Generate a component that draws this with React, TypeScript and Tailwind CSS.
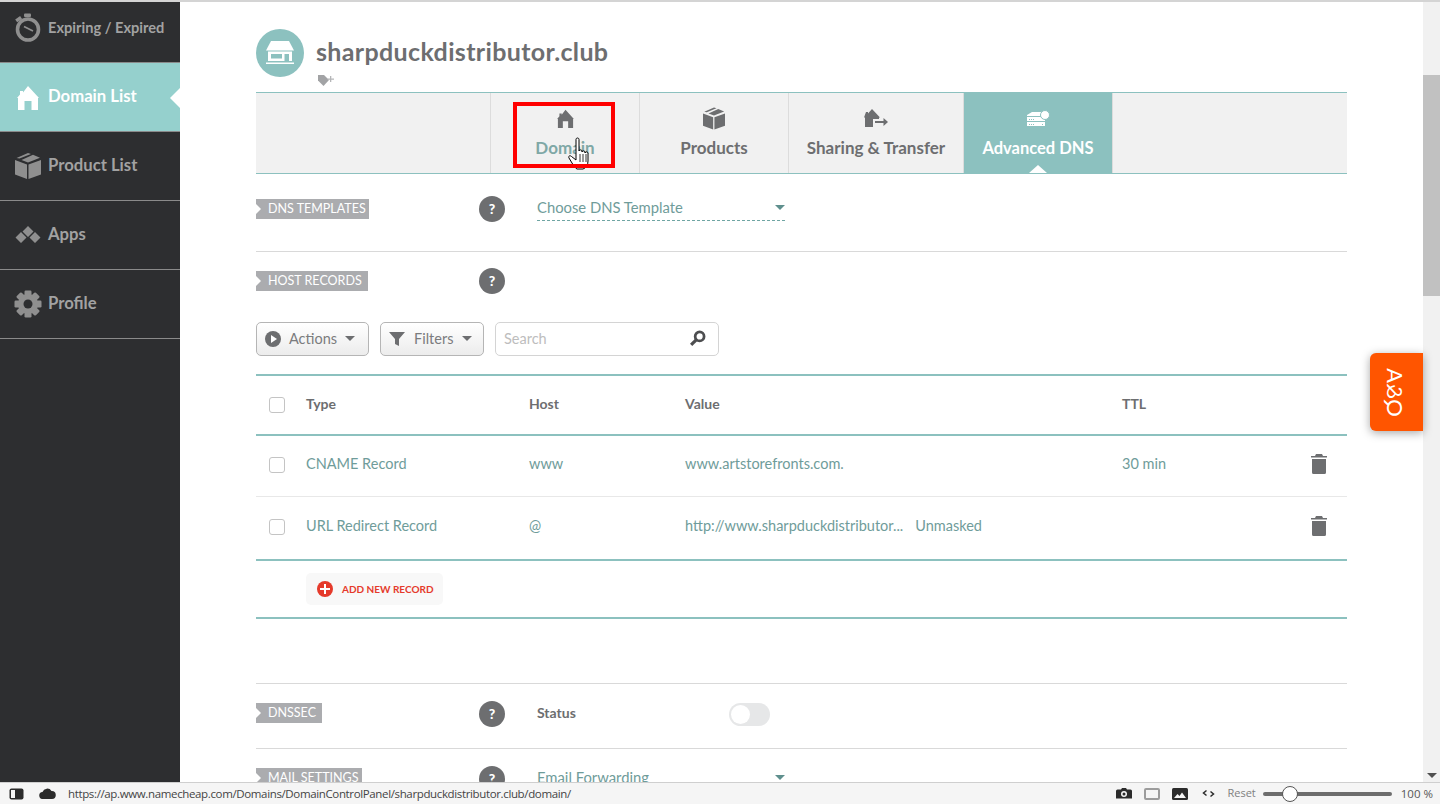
import React from "react";

function IconClock({ c = "#8f8f8f" }: { c?: string }) {
  return (
    <svg width="28" height="30" viewBox="0 0 28 30">
      <circle cx="14" cy="16.500" r="10.500" fill="none" stroke={c} strokeWidth="3.600" />
      <rect x="10" y="0.500" width="7" height="3.500" rx="1" fill={c} />
      <rect x="1.500" y="4.500" width="6" height="3.500" transform="rotate(-35 4.500 6)" fill={c} />
      <path d="M10 13.500l9 4.500" stroke={c} strokeWidth="1.800" fill="none" />
    </svg>
  );
}
function IconHouse({ c, w = 22, h = 25 }: { c: string; w?: number; h?: number }) {
  return (
    <svg width={w} height={h} viewBox="0 0 22 25">
      <path fill={c} d="M3 6h3v1.500L11 1l11 12h-1v12h-6.500v-9h-7v9H1V13H0l3-3.500z" />
    </svg>
  );
}
function IconBox({ c, w = 26, h = 26 }: { c: string; w?: number; h?: number }) {
  return (
    <svg width={w} height={h} viewBox="0 0 26 26">
      <path fill={c} d="M0 7l12 4.500V26L0 21.500zM26 7v14.500L13.500 26V11.500zM13 0l3 1-11.500 4.500L1.500 5zM18 1.800l7 3L13 9.500 6.500 7z" />
    </svg>
  );
}
function IconApps({ c }: { c: string }) {
  return (
    <svg width="26" height="18" viewBox="0 0 26 18">
      <path fill={c} d="M13 0l5.500 5.500L13 11 7.500 5.500zM6 6l5.500 5.500L6 17 .5 11.500zM20 6l5.500 5.500L20 17l-5.500-5.500z" />
    </svg>
  );
}
function IconGear({ c }: { c: string }) {
  return (
    <svg width="28" height="28" viewBox="0 0 28 28">
      <g fill={c}>
        <circle cx="14" cy="14" r="10" />
        {[0, 45, 90, 135, 180, 225, 270, 315].map((a) => (
          <rect key={a} x="10.500" y="0.500" width="7" height="6" rx="1.200" transform={`rotate(${a} 14 14)`} />
        ))}
      </g>
      <circle cx="14" cy="14" r="4.500" fill="#2d2e30" />
    </svg>
  );
}
function Store() {
  return (
    <svg width="28" height="24" viewBox="0 0 28 24">
      <path fill="#fff" d="M5 0h18l5 9.500H0z" />
      <path fill="#fff" d="M2 10.500h24V20H2zM0 21.500h28V23H0z" />
      <path fill="#8cc1bf" d="M5 13h11v4.500H5zM18.500 13h4.500v7h-4.500z" />
    </svg>
  );
}
function Help() {
  return (
    <div className="w-[26px] h-[26px] rounded-full bg-[#6d6e70] flex items-center justify-center text-white text-[14px] font-black leading-none">?</div>
  );
}
function Tag({ children, w }: { children: string; w: string }) {
  return (
    <div className={`relative h-[20px] ${w} bg-[#abacaf] text-white text-[12.5px] leading-[20px] pl-[12px] whitespace-nowrap overflow-hidden`}>
      <span className="absolute left-0 top-[5px] w-0 h-0 border-y-[5px] border-y-transparent border-l-[5px] border-l-white" />
      {children}
    </div>
  );
}
function Trash() {
  return (
    <svg width="16" height="20" viewBox="0 0 16 20">
      <path fill="#6d6e70" d="M5 0h6l1 2h4v1.500H0V2h4zM1 5h14v13.500a1.500 1.500 0 0 1-1.500 1.500h-11A1.500 1.500 0 0 1 1 18.500z" />
    </svg>
  );
}
function Check() {
  return <div className="w-[16px] h-[16px] rounded-[3px] border border-[#c4c4c4] bg-white" />;
}
function Caret({ c = "#6d6e70" }: { c?: string }) {
  return <span className="inline-block w-0 h-0 border-x-[5px] border-x-transparent border-t-[5px]" style={{ borderTopColor: c }} />;
}
function SideItem({ icon, label, active, small, h = "h-[69px]", pad = "" }: { icon: React.ReactNode; label: string; active?: boolean; small?: boolean; h?: string; pad?: string }) {
  return (
    <div className={`relative ${h} ${pad} flex items-center pl-[14px] gap-[6px] border-b border-[#8a8a8a] ${active ? "bg-[#95d0cd] text-white" : "text-[#a2a2a2]"} font-bold ${small ? "text-[14.600px]" : "text-[16.700px]"}`}>
      <div className="w-[28px] flex justify-center shrink-0">{icon}</div>
      <span className="whitespace-nowrap">{label}</span>
      {active && <span className="absolute right-0 top-[25px] w-0 h-0 border-y-[10px] border-y-transparent border-r-[10px] border-r-white" />}
    </div>
  );
}
function TabItem({ icon, label, w, active, labelColor }: { icon: React.ReactNode; label: string; w: string; active?: boolean; labelColor?: string }) {
  return (
    <div className={`relative ${w} h-full flex flex-col items-center border-r border-[#dcdcdc] ${active ? "bg-[#8cc1bf] text-white" : labelColor ?? "text-[#6d6e70]"}`}>
      <div className="h-[26px] mt-[12px] flex items-center justify-center">{icon}</div>
      <div className={`mt-[5px] ${active ? "text-[16.500px]" : "text-[17px]"} font-bold leading-[24px] whitespace-nowrap`}>{label}</div>
      {active && <span className="absolute bottom-0 left-1/2 -ml-[9px] w-0 h-0 border-x-[9px] border-x-transparent border-b-[8px] border-b-white" />}
    </div>
  );
}
function Row({ cells, border, textPad = "pb-[3px]" }: { cells: React.ReactNode[]; border: string; textPad?: string }) {
  return (
    <div className={`grid grid-cols-[50px_223px_156px_437px_188px_37px] items-center ${border}`}>
      {cells.map((c, i) => (
        <div key={i} className={i === 0 ? "pl-[13px] flex" : i === 5 ? "pl-[1px] flex pb-[3px]" : textPad}>{c}</div>
      ))}
    </div>
  );
}

export default function App() {
  return (
    <div className="w-[1440px] h-[804px] overflow-hidden flex flex-col bg-white text-[#6d6e70]" style={{ fontFamily: "Lato, 'Open Sans', sans-serif" }}>
      <div className="h-[2px] bg-[#d4d4d4] shrink-0" />
      <div className="relative flex-1 flex min-h-0">
        <aside className="w-[180px] bg-[#2d2e30] shrink-0">
          <SideItem h="h-[61px]" pad="pb-[8px]" small icon={<IconClock />} label="Expiring / Expired" />
          <SideItem active icon={<IconHouse c="#fff" />} label="Domain List" />
          <SideItem icon={<IconBox c="#8f8f8f" />} label="Product List" />
          <SideItem icon={<IconApps c="#8f8f8f" />} label="Apps" />
          <SideItem icon={<IconGear c="#8f8f8f" />} label="Profile" />
        </aside>

        <main className="w-[1243px] pl-[76px] overflow-hidden shrink-0">
          <div className="w-[1091px]">
            <header className="h-[90px] relative flex items-start">
              <div className="mt-[27px] w-[48px] h-[48px] rounded-full bg-[#8cc1bf] flex items-center justify-center shrink-0">
                <Store />
              </div>
              <div className="ml-[12px] mt-[33px]">
                <div className="text-[25px] tracking-[0.35px] leading-[32px] font-bold text-[#6d6e70] whitespace-nowrap">sharpduckdistributor.club</div>
                <svg className="mt-[6px] ml-[1px]" width="18" height="14" viewBox="0 0 18 14">
                  <path fill="#a2a3a5" d="M1 2h6l5 5-5.500 6L1 7.500z" />
                  <path fill="#b5b6b8" d="M13 3h1.300v2.500H17v1.200h-2.700V9H13V6.700h-2.500V5.500H13z" />
                </svg>
              </div>
            </header>

            <nav className="h-[82px] box-border border-y border-[#8cc1bf] bg-[#f1f1f1] flex">
              <div className="w-[235px] h-full border-r border-[#dcdcdc]" />
              <TabItem w="w-[149px]" labelColor="text-[#7fa8a6]" icon={<IconHouse c="#6d6e70" w={17} h={19} />} label="Domain" />
              <TabItem w="w-[149px]" icon={<IconBox c="#6d6e70" w={22} h={23} />} label="Products" />
              <TabItem w="w-[175px]" icon={
                <svg width="24" height="19" viewBox="0 0 24 19">
                  <path fill="#6d6e70" d="M2 3h2v1.500L8 0l8 8.500h-1V10H9v8H1V8.500H0zM11 12h8.500V9l4.500 4-4.500 4v-3h-8.500z" />
                </svg>
              } label="Sharing &amp; Transfer" />
              <TabItem w="w-[149px]" active icon={
                <svg width="24" height="17" viewBox="0 0 24 17">
                  <path fill="#fff" d="M6 2h9l3 3v1H1V5zM1 7h18v4H1zM1 12h18v4H1z" />
                  <path fill="#8cc1bf" d="M3 9h1v1H3zM5 9h1v1H5zM7 9h1v1H7zM3 14h1v1H3zM5 14h1v1H5zM7 14h1v1H7zM16 14h1v1h-1z" />
                  <circle cx="19" cy="5" r="4.500" fill="#fff" stroke="#8cc1bf" />
                </svg>
              } label="Advanced DNS" />
            </nav>

            <section className="h-[78px] border-b border-[#d9d9d9] flex items-start pt-[25px]">
              <div className="w-[223px]"><Tag w="w-[113px]">DNS TEMPLATES</Tag></div>
              <div className="-mt-[3px] w-[58px]"><Help /></div>
              <div className="w-[248px] h-[24px] -mt-[2px] pb-[2px] border-b border-dashed border-[#6fa5a3] flex items-center justify-between text-[14.800px] text-[#6f9c9a]">
                <span>Choose DNS Template</span>
                <span className="flex"><Caret c="#5f8f8d" /></span>
              </div>
            </section>

            <section className="pt-[19px] flex items-start">
              <div className="w-[223px]"><Tag w="w-[112px]">HOST RECORDS</Tag></div>
              <div className="-mt-[3px]"><Help /></div>
            </section>

            <div className="mt-[28px] flex gap-[11px] h-[34px]">
              <button className="w-[113px] box-border rounded-[5px] border border-[#b5b5b5] bg-gradient-to-b from-white to-[#ececec] flex items-center pl-[8px] pb-[1px] text-[14.500px] text-[#7b7c7e]">
                <span className="w-[16px] h-[16px] rounded-full bg-[#6d6e70] flex items-center justify-center"><span className="w-0 h-0 border-y-[4px] border-y-transparent border-l-[6px] border-l-white ml-[1px]" /></span>
                <span className="ml-[8px]">Actions</span>
                <span className="ml-[8px] flex"><Caret /></span>
              </button>
              <button className="w-[104px] box-border rounded-[5px] border border-[#b5b5b5] bg-gradient-to-b from-white to-[#ececec] flex items-center pl-[8px] pb-[1px] text-[14.500px] text-[#7b7c7e]">
                <svg width="16" height="16" viewBox="0 0 16 16"><path fill="#6d6e70" d="M0 1h16L10 8v7l-4-2V8z" /></svg>
                <span className="ml-[9px]">Filters</span>
                <span className="ml-[9px] flex"><Caret /></span>
              </button>
              <div className="w-[224px] box-border rounded-[5px] border border-[#d4d4d4] flex items-center justify-between pl-[8px] pr-[12px] pb-[1px] text-[14.500px] text-[#bdbdbd]">
                <span>Search</span>
                <svg width="17" height="17" viewBox="0 0 16 16"><circle cx="10" cy="6" r="4.200" fill="none" stroke="#4d4e50" strokeWidth="2.600" /><path d="M7 9l-5 5" stroke="#4d4e50" strokeWidth="3" /></svg>
              </div>
            </div>

            <div className="mt-[18px] border-t-2 border-[#8cc1bf]">
              <div className="h-[58px] grid">
                <Row border="h-[58px]" textPad="pb-[5px]" cells={[<Check />, <b className="text-[14px] font-bold">Type</b>, <b className="text-[14px] font-bold">Host</b>, <b className="text-[14px] font-bold">Value</b>, <b className="text-[14px] font-bold">TTL</b>, null]} />
              </div>
              <div className="border-t-2 border-[#8cc1bf] text-[14.500px] text-[#6f9c9a]">
                <Row border="h-[61px] pb-[2px] border-b border-[#e8e8e8]" cells={[<Check />, "CNAME Record", "www", "www.artstorefronts.com.", "30 min", <Trash />]} />
                <Row border="h-[62px] pb-[2px]" cells={[<Check />, "URL Redirect Record", "@", <span className="whitespace-nowrap">http://www.sharpduckdistributor...<span className="ml-[12px]">Unmasked</span></span>, "", <Trash />]} />
              </div>
              <div className="h-[60px] box-border border-y-2 border-[#8cc1bf] pl-[50px] pt-[12px]">
                <div className="w-[137px] h-[32px] rounded-[5px] bg-[#f8f8f8] flex items-center pl-[11px] gap-[9px] text-[10px] font-bold text-[#e53a2b] whitespace-nowrap">
                  <span className="w-[16px] h-[16px] rounded-full bg-[#e53a2b] relative shrink-0">
                    <span className="absolute left-[3px] top-[7px] w-[10px] h-[2px] bg-white" />
                    <span className="absolute left-[7px] top-[3px] w-[2px] h-[10px] bg-white" />
                  </span>
                  ADD NEW RECORD
                </div>
              </div>
            </div>

            <section className="mt-[64px] h-[66px] border-y border-[#d9d9d9] flex items-start pt-[19px]">
              <div className="w-[223px]"><Tag w="w-[66px]">DNSSEC</Tag></div>
              <div className="-mt-[2px] w-[58px]"><Help /></div>
              <div className="w-[192px] text-[14px] font-bold leading-[20px]">Status</div>
              <div className="w-[41px] h-[23px] rounded-full bg-[#e6e7e8] flex items-center pl-[2px]"><span className="w-[19px] h-[19px] rounded-full bg-white" /></div>
            </section>

            <section className="flex items-start pt-[19px]">
              <div className="w-[223px]"><Tag w="w-[106px]">MAIL SETTINGS</Tag></div>
              <div className="-mt-[2px] w-[58px]"><Help /></div>
              <div className="w-[248px] h-[18px] flex items-center justify-between text-[14.800px] text-[#6f9c9a]">
                <span>Email Forwarding</span>
                <span className="flex"><Caret c="#5f8f8d" /></span>
              </div>
            </section>
          </div>
        </main>

        <div className="w-[17px] bg-[#f1f1f1] shrink-0 flex flex-col">
          <div className="mt-[73px] h-[221px] bg-[#c1c1c1]" />
          <div className="mt-auto mb-[4px] flex justify-center"><Caret c="#505050" /></div>
        </div>

        {/* Overlays */}
        <div className="absolute left-[1370px] top-[351px] w-[53px] h-[78px] rounded-l-[6px] bg-[#ff5500] shadow-[0_2px_10px_rgba(0,0,0,0.35)] flex items-center justify-center text-white text-[22px] pr-[4px]">
          <span className="[writing-mode:vertical-rl] -scale-y-100 leading-none">Q&amp;A</span>
        </div>
        <svg className="absolute left-[568px] top-[135px]" width="26" height="36" viewBox="0 0 26 36">
          <path fill="#fff" stroke="#000" strokeWidth="1" d="M8 2.500c0-2 3-2 3 0V14c0-1.500 3-1.500 3 0v1c0-1.500 3-1.500 3 0v1c0-1.500 3-1.500 3 0v8c0 4-2 7-5 8H9c-2-1-3-3-5-6l-3-5c-1-2 1-3 2.500-1.500L8 23z" />
          <path stroke="#000" strokeWidth="0.800" d="M12 17v8M15 17v8M18 17v8" />
        </svg>
        <div className="absolute left-[513px] top-[100px] w-[102px] h-[66px] border-[4px] border-[#ff0000]" />
      </div>

      <footer className="h-[22px] box-border shrink-0 bg-[#f5f5f5] border-t border-[#cfcfcf] flex items-center text-[11.500px] text-[#444]" style={{ fontFamily: "'Open Sans', sans-serif" }}>
        <svg className="ml-[9px]" width="15" height="12" viewBox="0 0 15 12"><rect x="0.500" y="0.500" width="14" height="11" rx="2" fill="#2b2b2b" /><rect x="2" y="2" width="4" height="8" fill="#f5f5f5" /></svg>
        <svg className="ml-[15px]" width="17" height="11" viewBox="0 0 17 11"><path fill="#2b2b2b" d="M4 11a3.500 3.500 0 0 1-.5-7A5 5 0 0 1 12.500 3a4 4 0 0 1 .5 8z" /></svg>
        <span className="ml-[12px] whitespace-nowrap tracking-[-0.36px]">https://ap.www.namecheap.com/Domains/DomainControlPanel/sharpduckdistributor.club/domain/</span>
        <div className="ml-auto flex items-center">
          <svg width="16" height="13" viewBox="0 0 16 13"><path fill="#2b2b2b" d="M1.500 2.500H5L6 1h4l1 1.500h3.500A1.500 1.500 0 0 1 16 4v7.500H0V4a1.500 1.500 0 0 1 1.500-1.500z" /><circle cx="8" cy="7" r="3" fill="#f5f5f5" /><circle cx="8" cy="7" r="1.500" fill="#2b2b2b" /></svg>
          <div className="ml-[12px] w-[16px] h-[12px] rounded-[2px] border-2 border-[#9c9c9c]" />
          <svg className="ml-[12px]" width="16" height="12" viewBox="0 0 16 12"><rect width="16" height="12" rx="1.500" fill="#2b2b2b" /><path fill="#f5f5f5" d="M2 10l3.500-4 2 2 2.500-3.500L14 10z" /></svg>
          <svg className="ml-[14px]" width="13" height="9" viewBox="0 0 13 9"><path d="M4.500 1.500L1.500 4l3 2.500M8.500 2.500l3 2.500-3 2.500" fill="none" stroke="#2b2b2b" strokeWidth="1.500" /></svg>
          <span className="ml-[12px] text-[11px] text-[#808080]">Reset</span>
          <div className="relative ml-[7px] w-[129px] h-[4px] rounded-full bg-[#6d6d6d]">
            <span className="absolute left-[19px] -top-[6px] w-[16px] h-[16px] rounded-full bg-white border border-[#555]" />
          </div>
          <span className="ml-[9px] mr-[7px] text-[#555]">100 %</span>
        </div>
      </footer>
    </div>
  );
}
